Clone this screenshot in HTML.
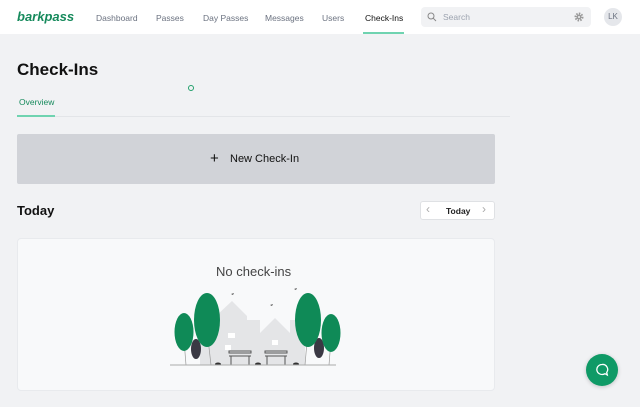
<!DOCTYPE html>
<html><head><meta charset="utf-8"><style>
*{margin:0;padding:0;box-sizing:border-box}
body{width:640px;height:407px;overflow:hidden;background:#f1f2f4;font-family:"Liberation Sans",sans-serif;position:relative}
.nav{position:absolute;left:0;top:0;width:640px;height:34px;background:#fff}
.a{position:absolute;font-size:8.5px;color:#6b7280;top:13px}
.abs{position:absolute}
</style></head><body>
<div class="nav">
<div class="abs" style="left:17px;top:9px;font-size:13px;font-weight:bold;font-style:italic;color:#168a5c">barkpass</div>
<div class="a" style="left:96px">Dashboard</div>
<div class="a" style="left:156px">Passes</div>
<div class="a" style="left:203px">Day Passes</div>
<div class="a" style="left:265px">Messages</div>
<div class="a" style="left:322px">Users</div>
<div class="a" style="left:365px;color:#111">Check-Ins</div>
<div class="abs" style="left:363px;top:32px;width:41px;height:2px;background:#6fd3b0"></div>
<div class="abs" style="left:421px;top:7px;width:170px;height:20px;background:#f1f2f4;border-radius:4px"></div>
<svg class="abs" style="left:427px;top:12px" width="10" height="10" viewBox="0 0 10 10"><circle cx="4" cy="4" r="3" fill="none" stroke="#888" stroke-width="1"/><path d="M6.2 6.2L9 9" stroke="#888" stroke-width="1"/></svg>
<div class="a" style="left:443px;top:12px;color:#9ca3af;font-size:8.5px">Search</div>
<svg class="abs" style="left:574px;top:12px" width="10" height="10" viewBox="0 0 10 10"><circle cx="5" cy="5" r="3.5" fill="none" stroke="#999" stroke-width="2" stroke-dasharray="1.5 1.2"/><circle cx="5" cy="5" r="2.5" fill="#999"/><circle cx="5" cy="5" r="1" fill="#f1f2f4"/></svg>
<div class="abs" style="left:604px;top:8px;width:18px;height:18px;border-radius:50%;background:#e5e7eb;font-size:8px;color:#6b7280;text-align:center;line-height:18px">LK</div>
</div>
<div class="abs" style="left:17px;top:60px;font-size:17px;font-weight:bold;color:#111">Check-Ins</div>
<div class="abs" style="left:188px;top:85px;width:6px;height:6px;border:1.3px solid #22a06b;border-radius:50%"></div>
<div class="abs" style="left:19px;top:97px;font-size:8.5px;color:#168a5c">Overview</div>
<div class="abs" style="left:17px;top:116px;width:493px;height:1px;background:#e3e5e8"></div>
<div class="abs" style="left:17px;top:115px;width:38px;height:2px;background:#6fd3b0"></div>
<div class="abs" style="left:17px;top:134px;width:478px;height:50px;background:#d1d3d8;border-radius:2px"></div>
<div class="abs" style="left:210px;top:151px;font-size:15px;color:#111;line-height:15px">+</div>
<div class="abs" style="left:230px;top:153px;font-size:11px;color:#111">New Check-In</div>
<div class="abs" style="left:17px;top:203px;font-size:13px;font-weight:bold;color:#111">Today</div>
<div class="abs" style="left:420px;top:201px;width:75px;height:19px;background:#fff;border:1px solid #dfe1e4;border-radius:3px"></div>
<div class="abs" style="left:426px;top:202px;font-size:12px;color:#aaa">‹</div>
<div class="abs" style="left:446px;top:206px;font-size:8.5px;font-weight:bold;color:#222">Today</div>
<div class="abs" style="left:482px;top:202px;font-size:12px;color:#aaa">›</div>
<div class="abs" style="left:17px;top:238px;width:478px;height:153px;background:#f8f9fa;border:1px solid #e8eaed;border-radius:4px"></div>
<div class="abs" style="left:216px;top:264px;font-size:13px;color:#444">No check-ins</div>
<svg class="abs" style="left:165px;top:285px" width="180" height="85" viewBox="165 285 180 85">
<g fill="#e4e5e7">
<polygon points="216,365 216,316 232,301 247,316 247,365"/>
<polygon points="200,365 200,315 216,315 216,365"/>
<polygon points="247,365 247,320 260,320 260,365"/>
<polygon points="260,365 260,333 275,318 290,333 290,365"/>
<polygon points="290,365 290,320 305,320 305,365"/>
</g>
<g fill="#fff"><rect x="228" y="333" width="7" height="5"/><rect x="272" y="340" width="6" height="5"/><rect x="225" y="345" width="6" height="5"/></g>
<g stroke="#999" stroke-width="0.7"><line x1="184" y1="340" x2="186" y2="365"/><line x1="207" y1="330" x2="211" y2="365"/><line x1="308" y1="330" x2="305" y2="365"/><line x1="331" y1="340" x2="329" y2="365"/></g>
<ellipse cx="196" cy="349" rx="5" ry="10" fill="#3a3944"/>
<ellipse cx="319" cy="348" rx="5" ry="10" fill="#3a3944"/>
<ellipse cx="184" cy="332" rx="9.5" ry="19" fill="#0f8a57"/>
<ellipse cx="207" cy="320" rx="13" ry="27" fill="#0f8a57"/>
<ellipse cx="308" cy="320" rx="13" ry="27" fill="#0f8a57"/>
<ellipse cx="331" cy="333" rx="9.5" ry="19" fill="#0f8a57"/>
<g stroke="#555" stroke-width="1" fill="none"><rect x="229" y="351" width="22" height="2"/><rect x="265" y="351" width="22" height="2"/><path d="M229 356h22M231 356v9M249 356v9M265 356h22M267 356v9M285 356v9"/></g>
<g fill="#333"><ellipse cx="218" cy="364" rx="3" ry="1.5"/><ellipse cx="258" cy="364" rx="3" ry="1.5"/><ellipse cx="296" cy="364" rx="3" ry="1.5"/></g>
<g fill="#555"><path d="M231 294l3 -1 -1 2z"/><path d="M270 305l3 -1 -1 2z"/><path d="M294 289l3 -1 -1 2z"/></g>
<line x1="170" y1="365" x2="336" y2="365" stroke="#aaa" stroke-width="1"/>
</svg>
<div class="abs" style="left:586px;top:354px;width:32px;height:32px;border-radius:50%;background:#0f9a66;box-shadow:0 1px 4px rgba(0,0,0,.2)"></div>
<svg class="abs" style="left:595px;top:363px" width="14" height="14" viewBox="0 0 14 14"><path d="M7 1.5a5.3 5 0 1 0 3 9.2l2.3 1.3-.6-2.6A5 5 0 0 0 7 1.5z" fill="none" stroke="#fff" stroke-width="1.3"/></svg>
</body></html>
